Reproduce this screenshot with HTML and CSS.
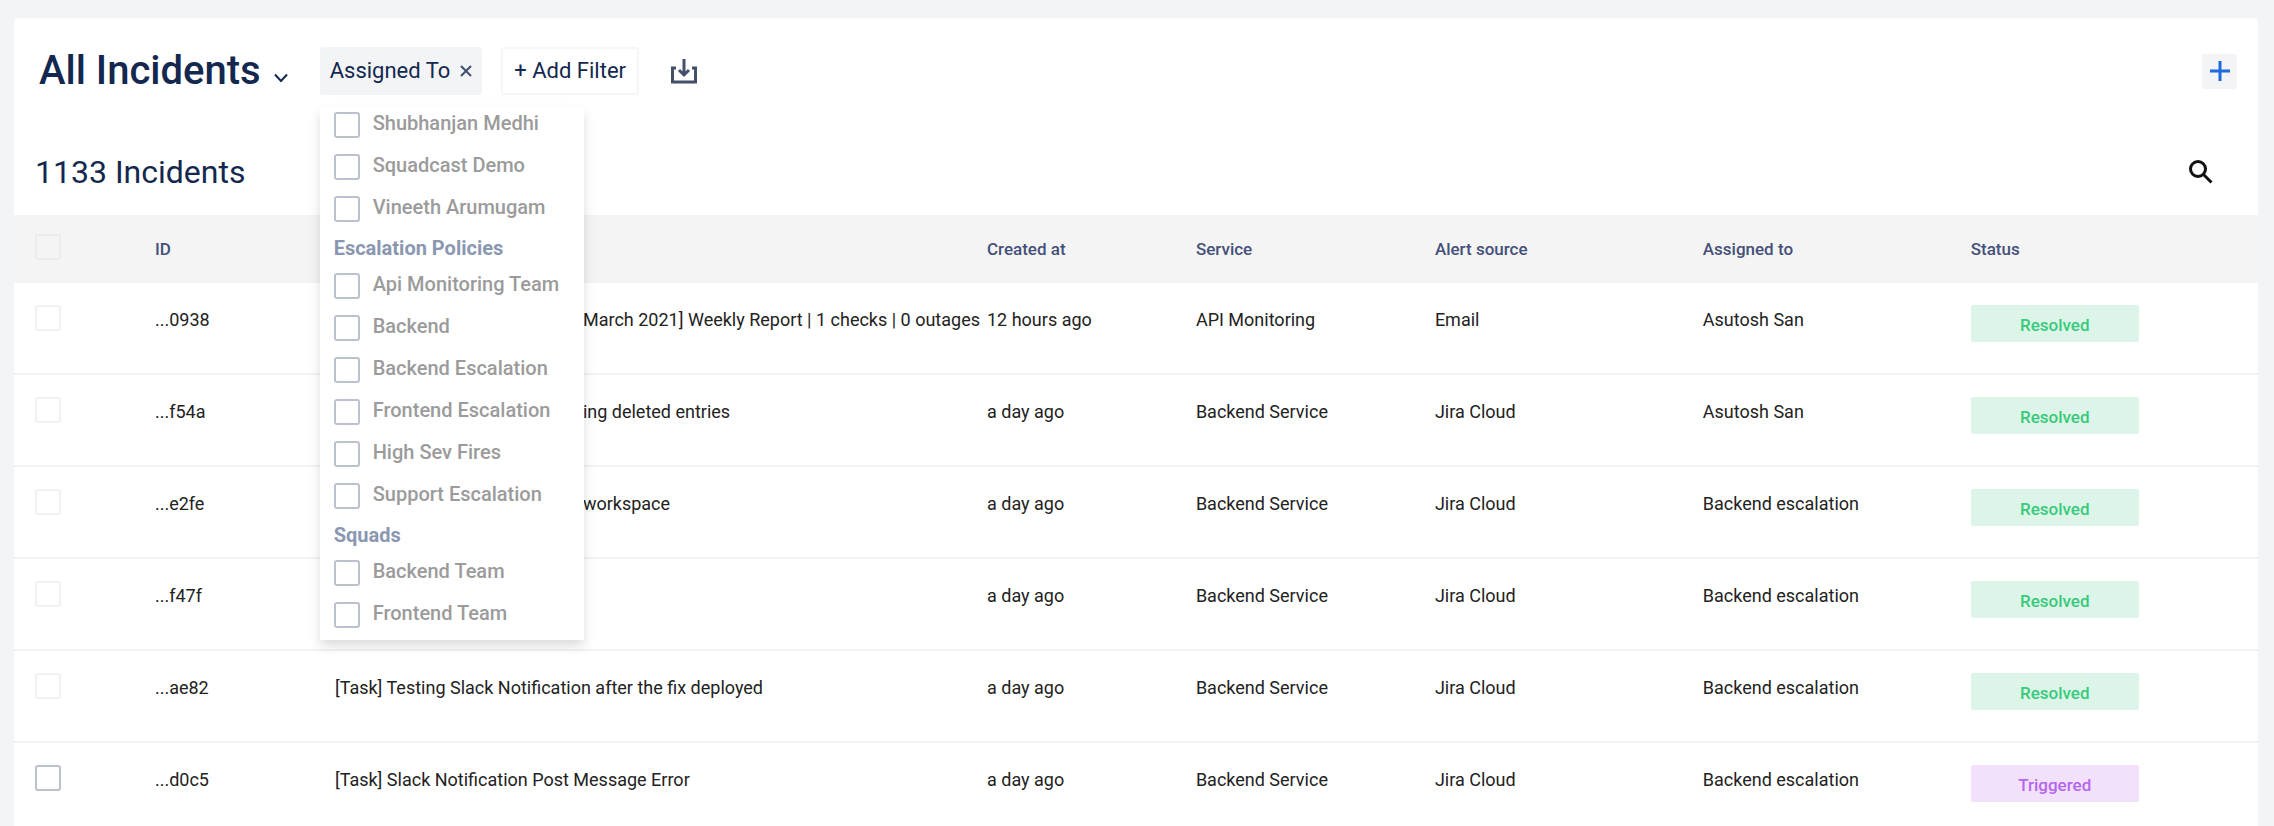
FILE: index.html
```
<!DOCTYPE html>
<html lang="en">
<head>
<meta charset="utf-8">
<title>All Incidents</title>
<link rel="stylesheet" href="styles.css">
</head>
<body>
<main class="page">
  <section class="card">
    <header class="toolbar">
      <button class="view-picker" type="button">
        <span class="view-name">All Incidents</span>
        <svg class="chevron" viewBox="0 0 16 10" aria-hidden="true"><path d="M2 1.500 8 8l6-6.500"/></svg>
      </button>
      <div class="filter">
        <button class="chip chip-active" type="button">Assigned To
          <svg class="close" viewBox="0 0 12 12" aria-hidden="true"><path d="M1 1l10 10M11 1 1 11"/></svg>
        </button>
        <div class="menu">
          <div class="group">
            <label class="option"><input class="check" type="checkbox"><span>Shubhanjan Medhi</span></label>
            <label class="option"><input class="check" type="checkbox"><span>Squadcast Demo</span></label>
            <label class="option"><input class="check" type="checkbox"><span>Vineeth Arumugam</span></label>
          </div>
          <h3 class="group-title">Escalation Policies</h3>
          <div class="group">
            <label class="option"><input class="check" type="checkbox"><span>Api Monitoring Team</span></label>
            <label class="option"><input class="check" type="checkbox"><span>Backend</span></label>
            <label class="option"><input class="check" type="checkbox"><span>Backend Escalation</span></label>
            <label class="option"><input class="check" type="checkbox"><span>Frontend Escalation</span></label>
            <label class="option"><input class="check" type="checkbox"><span>High Sev Fires</span></label>
            <label class="option"><input class="check" type="checkbox"><span>Support Escalation</span></label>
          </div>
          <h3 class="group-title">Squads</h3>
          <div class="group">
            <label class="option"><input class="check" type="checkbox"><span>Backend Team</span></label>
            <label class="option"><input class="check" type="checkbox"><span>Frontend Team</span></label>
          </div>
        </div>
      </div>
      <button class="chip chip-outline" type="button">+ Add Filter</button>
      <button class="icon-button" type="button" aria-label="Download">
        <svg class="download" viewBox="0 0 26 26" aria-hidden="true"><path d="M13 1v16M8 12l5 5 5-5M5 10H1.500v14h23V10H21"/></svg>
      </button>
      <button class="icon-button add" type="button" aria-label="Add incident">
        <svg class="plus" viewBox="0 0 20 20" aria-hidden="true"><path d="M10 0v20M0 10h20"/></svg>
      </button>
    </header>
    <div class="summary">
      <h2 class="count">1133 Incidents</h2>
      <button class="icon-button" type="button" aria-label="Search">
        <svg class="search" viewBox="0 0 24 24" aria-hidden="true"><circle cx="9" cy="9" r="7.500"/><path d="M14.500 14.500 22.500 22.500"/></svg>
      </button>
    </div>
    <table class="incidents">
      <colgroup>
        <col class="col-check"><col class="col-id"><col class="col-title"><col class="col-created"><col class="col-service"><col class="col-source"><col class="col-assigned"><col>
      </colgroup>
      <thead>
        <tr><th class="select"><input class="check faint" type="checkbox" disabled aria-label="Select all"></th><th>ID</th><th></th><th>Created at</th><th>Service</th><th>Alert source</th><th>Assigned to</th><th>Status</th></tr>
      </thead>
      <tbody>
        <tr><td class="select"><input class="check faint" type="checkbox" disabled aria-label="Select 0938"></td><td>...0938</td><td class="title-long">8 March 2021] Weekly Report | 1 checks | 0 outages</td><td>12 hours ago</td><td>API Monitoring</td><td>Email</td><td>Asutosh San</td><td class="state"><span class="badge resolved">Resolved</span></td></tr>
        <tr><td class="select"><input class="check faint" type="checkbox" disabled aria-label="Select f54a"></td><td>...f54a</td><td class="title-covered">ing deleted entries</td><td>a day ago</td><td>Backend Service</td><td>Jira Cloud</td><td>Asutosh San</td><td class="state"><span class="badge resolved">Resolved</span></td></tr>
        <tr><td class="select"><input class="check faint" type="checkbox" disabled aria-label="Select e2fe"></td><td>...e2fe</td><td class="title-covered">workspace</td><td>a day ago</td><td>Backend Service</td><td>Jira Cloud</td><td>Backend escalation</td><td class="state"><span class="badge resolved">Resolved</span></td></tr>
        <tr><td class="select"><input class="check faint" type="checkbox" disabled aria-label="Select f47f"></td><td>...f47f</td><td></td><td>a day ago</td><td>Backend Service</td><td>Jira Cloud</td><td>Backend escalation</td><td class="state"><span class="badge resolved">Resolved</span></td></tr>
        <tr><td class="select"><input class="check faint" type="checkbox" disabled aria-label="Select ae82"></td><td>...ae82</td><td>[Task] Testing Slack Notification after the fix deployed</td><td>a day ago</td><td>Backend Service</td><td>Jira Cloud</td><td>Backend escalation</td><td class="state"><span class="badge resolved">Resolved</span></td></tr>
        <tr><td class="select"><input class="check" type="checkbox" aria-label="Select d0c5"></td><td>...d0c5</td><td>[Task] Slack Notification Post Message Error</td><td>a day ago</td><td>Backend Service</td><td>Jira Cloud</td><td>Backend escalation</td><td class="state"><span class="badge triggered">Triggered</span></td></tr>
      </tbody>
    </table>
  </section>
</main>
</body>
</html>
```
FILE: styles.css
```
* { box-sizing: border-box; }

body {
  margin: 0;
  background: #f2f4f6;
  font-family: Roboto, "Liberation Sans", sans-serif;
}

button {
  margin: 0;
  padding: 0;
  border: 0;
  background: none;
  color: inherit;
  font: inherit;
}

svg {
  display: block;
  fill: none;
  stroke: currentColor;
}

.page {
  height: 100vh;
  overflow: hidden;
  padding: 18px 16px 0 14px;
}

.card {
  background: #fff;
  border-radius: 4px;
}

.toolbar {
  display: flex;
  align-items: center;
  padding: 29px 21px 0 25px;
  color: #14284f;
}

.view-picker {
  display: flex;
  align-items: center;
  gap: 12px;
  margin-right: 31px;
}

.view-name {
  font-size: 40px;
  font-weight: 500;
  line-height: 48px;
}

.chevron {
  width: 16px;
  height: 10px;
  margin-top: 14px;
  stroke-width: 2;
}

.filter { position: relative; }

.chip {
  display: flex;
  align-items: center;
  height: 48px;
  border-radius: 3px;
  font-size: 22px;
  line-height: 28px;
}

.chip-active {
  gap: 10px;
  padding: 0 10px;
  background: #f2f4f6;
}

.chip-outline {
  margin: 0 32px 0 19px;
  padding: 0 11px;
  border: 2px solid #f5f6f8;
}

.close {
  width: 12px;
  height: 12px;
  stroke: #3f4f6f;
  stroke-width: 2;
}

.download {
  width: 26px;
  height: 26px;
  color: #435069;
  stroke-width: 3;
}

.add {
  display: grid;
  place-items: center;
  width: 35px;
  height: 35px;
  margin-left: auto;
  border-radius: 2px;
  background: #f2f4f6;
  color: #1f6ae0;
}

.plus {
  width: 20px;
  height: 20px;
  stroke-width: 3;
}

.menu {
  position: absolute;
  top: 60px;
  left: 0;
  z-index: 1;
  width: 264px;
  padding: 5px 14px 12px;
  border-radius: 2px;
  background: #fff;
  box-shadow: 0 6px 12px rgba(0, 0, 0, 0.14);
}

.group {
  display: grid;
  gap: 16px;
}

.option {
  display: flex;
  gap: 13px;
  height: 26px;
  color: #9b9b9b;
  font-size: 20px;
  font-weight: 500;
  line-height: 22px;
  white-space: nowrap;
}

.group-title {
  margin: 16px 0 15px;
  color: #8a97b1;
  font-size: 20px;
  font-weight: 700;
  line-height: 20px;
}

.check {
  appearance: none;
  flex: none;
  display: block;
  width: 26px;
  height: 26px;
  margin: 0;
  border: 2px solid #bbc2cd;
  border-radius: 3px;
  background: #fff;
}

.faint {
  border-color: #eff2f4;
  background: transparent;
}

.summary {
  display: flex;
  align-items: center;
  justify-content: space-between;
  padding: 57px 45px 23px 21px;
}

.count {
  margin: 0;
  color: #14284f;
  font-size: 32px;
  font-weight: 400;
  line-height: 40px;
}

.search {
  width: 24px;
  height: 24px;
  color: #111;
  stroke-width: 3;
}

.incidents {
  width: 100%;
  border-collapse: separate;
  border-spacing: 0;
  table-layout: fixed;
}

.col-check { width: 6.28%; }
.col-id { width: 8.02%; }
.col-title { width: 29.06%; }
.col-created { width: 9.31%; }
.col-service { width: 10.65%; }
.col-source { width: 11.94%; }
.col-assigned { width: 11.94%; }

th,
td {
  padding: 0;
  text-align: left;
  vertical-align: top;
  white-space: nowrap;
}

th {
  height: 68px;
  padding-top: 22px;
  background: #f4f4f4;
  color: #44507a;
  font-size: 17px;
  font-weight: 500;
  line-height: 24px;
}

td {
  height: 92px;
  padding-top: 25px;
  border-bottom: 2px solid #eff3f6;
  color: #222;
  font-size: 18px;
  line-height: 24px;
}

th.select { padding: 19px 0 0 21px; }

th .faint { border-color: #e9edee; }

td.select,
td.state { padding-top: 22px; }

td.select { padding-left: 21px; }

td.title-long {
  padding-right: 7px;
  text-align: right;
}

td.title-covered { padding-left: 248px; }

.badge {
  display: block;
  width: 168px;
  padding: 9px 0 6px;
  border-radius: 2px;
  font-size: 17px;
  font-weight: 500;
  line-height: 22px;
  text-align: center;
}

.resolved {
  background: #dcf5e8;
  color: #38ca7c;
}

.triggered {
  background: #f2e1fa;
  color: #b566ee;
}
```
